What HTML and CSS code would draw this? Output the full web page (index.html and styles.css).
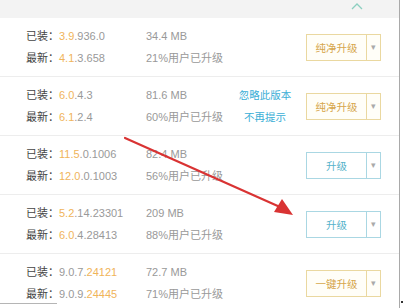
FILE: index.html
```html
<!DOCTYPE html>
<html lang="zh-cn">
<head>
    <meta charset="UTF-8">
    <meta name="viewport" content="width=device-width, initial-scale=1.0">
    <title>软件升级</title>
    <link rel="stylesheet" href="styles.css">
</head>
<body>
    <div class="panel">
        <div class="top-bar">
            <svg class="chevron" width="12" height="7" viewBox="0 0 12 7">
                <path d="M1 6 L6 1 L11 6" fill="none" stroke="#8ccfc0" stroke-width="1.3"/>
            </svg>
        </div>

        <div class="row">
            <div class="ver">
                <p><span class="label">已装：</span><span class="hl">3.9</span>.936.0</p>
                <p><span class="label">最新：</span><span class="hl">4.1</span>.3.658</p>
            </div>
            <div class="size">
                <p>34.4 MB</p>
                <p>21%用户已升级</p>
            </div>
            <div class="btn btn-gold"><span class="btn-main">纯净升级</span><span class="btn-drop">▾</span></div>
        </div>

        <div class="row">
            <div class="ver">
                <p><span class="label">已装：</span><span class="hl">6.0</span>.4.3</p>
                <p><span class="label">最新：</span><span class="hl">6.1</span>.2.4</p>
            </div>
            <div class="size">
                <p>81.6 MB</p>
                <p>60%用户已升级</p>
            </div>
            <div class="note">
                <p>忽略此版本</p>
                <p>不再提示</p>
            </div>
            <div class="btn btn-gold"><span class="btn-main">纯净升级</span><span class="btn-drop">▾</span></div>
        </div>

        <div class="row">
            <div class="ver">
                <p><span class="label">已装：</span><span class="hl">11.5</span>.0.1006</p>
                <p><span class="label">最新：</span><span class="hl">12.0</span>.0.1003</p>
            </div>
            <div class="size">
                <p>82.4 MB</p>
                <p>56%用户已升级</p>
            </div>
            <div class="btn btn-blue"><span class="btn-main">升级</span><span class="btn-drop">▾</span></div>
        </div>

        <div class="row">
            <div class="ver">
                <p><span class="label">已装：</span><span class="hl">5.2</span>.14.23301</p>
                <p><span class="label">最新：</span><span class="hl">6.0</span>.4.28413</p>
            </div>
            <div class="size">
                <p>209 MB</p>
                <p>88%用户已升级</p>
            </div>
            <div class="btn btn-blue"><span class="btn-main">升级</span><span class="btn-drop">▾</span></div>
        </div>

        <div class="row">
            <div class="ver">
                <p><span class="label">已装：</span>9.0.7.<span class="hl">24121</span></p>
                <p><span class="label">最新：</span>9.0.9.<span class="hl">24445</span></p>
            </div>
            <div class="size">
                <p>72.7 MB</p>
                <p>71%用户已升级</p>
            </div>
            <div class="btn btn-gold"><span class="btn-main">一键升级</span><span class="btn-drop">▾</span></div>
        </div>
    </div>

    <!-- 标注箭头 -->
    <svg class="arrow" width="404" height="308" viewBox="0 0 404 308">
        <line x1="125" y1="138" x2="280" y2="207" stroke="#d93333" stroke-width="2.2" stroke-linecap="round"/>
        <polygon points="293,215 274,212 282,199" fill="#d93333"/>
    </svg>

    <div class="edge-line"></div>
    <div class="edge-dot"></div>
</body>
</html>
```

FILE: styles.css
```css
body {
    margin: 0;
    width: 404px;
    height: 308px;
    overflow: hidden;
    background-color: #fff;
    font-family: "Liberation Sans", "Noto Sans CJK SC", sans-serif;
    font-size: 11px;
    color: #999;
    position: relative;
}
p {
    margin: 0;
    line-height: 22px;
    white-space: nowrap;
}
.panel {
    width: 400px;
    box-sizing: border-box;
    border-right: 1px solid #a9a9a9;
}
.top-bar {
    height: 18px;
    background-color: #f3f3f3;
    display: flex;
    justify-content: flex-end;
    align-items: flex-start;
    padding-right: 36px;
}
.chevron {
    margin-top: 3px;
}
.row {
    height: 59px;
    box-sizing: border-box;
    border-bottom: 1px solid #ededed;
    display: flex;
    align-items: center;
    padding: 0 18px 0 26px;
}
.ver {
    width: 120px;
}
.label {
    color: #444;
}
.hl {
    color: #f0b45a;
}
.size {
    width: 88px;
}
.note {
    width: 62px;
    text-align: center;
    color: #39aed6;
    font-size: 10.5px;
}
.btn {
    margin-left: auto;
    height: 27px;
    display: flex;
    box-sizing: border-box;
    border: 1px solid;
    font-size: 10.5px;
}
.btn-main {
    width: 59px;
    display: flex;
    align-items: center;
    justify-content: center;
}
.btn-drop {
    width: 13px;
    display: flex;
    align-items: center;
    justify-content: center;
    border-left: 1px solid;
    color: #aaa;
    font-size: 9px;
}
.btn-gold {
    border-color: #ead8a0;
    background-color: #fffef8;
    color: #d6a64c;
}
.btn-gold .btn-drop {
    border-color: #ead8a0;
}
.btn-blue {
    border-color: #aad7e3;
    background-color: #fff;
    color: #55b2ca;
}
.btn-blue .btn-drop {
    border-color: #aad7e3;
}
.arrow {
    position: absolute;
    top: 0;
    left: 0;
    pointer-events: none;
}
.edge-line {
    position: absolute;
    left: 0;
    top: 303px;
    width: 57px;
    height: 1px;
    background-color: #b5b5b5;
}
.edge-dot {
    position: absolute;
    left: 401px;
    top: 301px;
    width: 2px;
    height: 2px;
    background-color: #333;
}
```
